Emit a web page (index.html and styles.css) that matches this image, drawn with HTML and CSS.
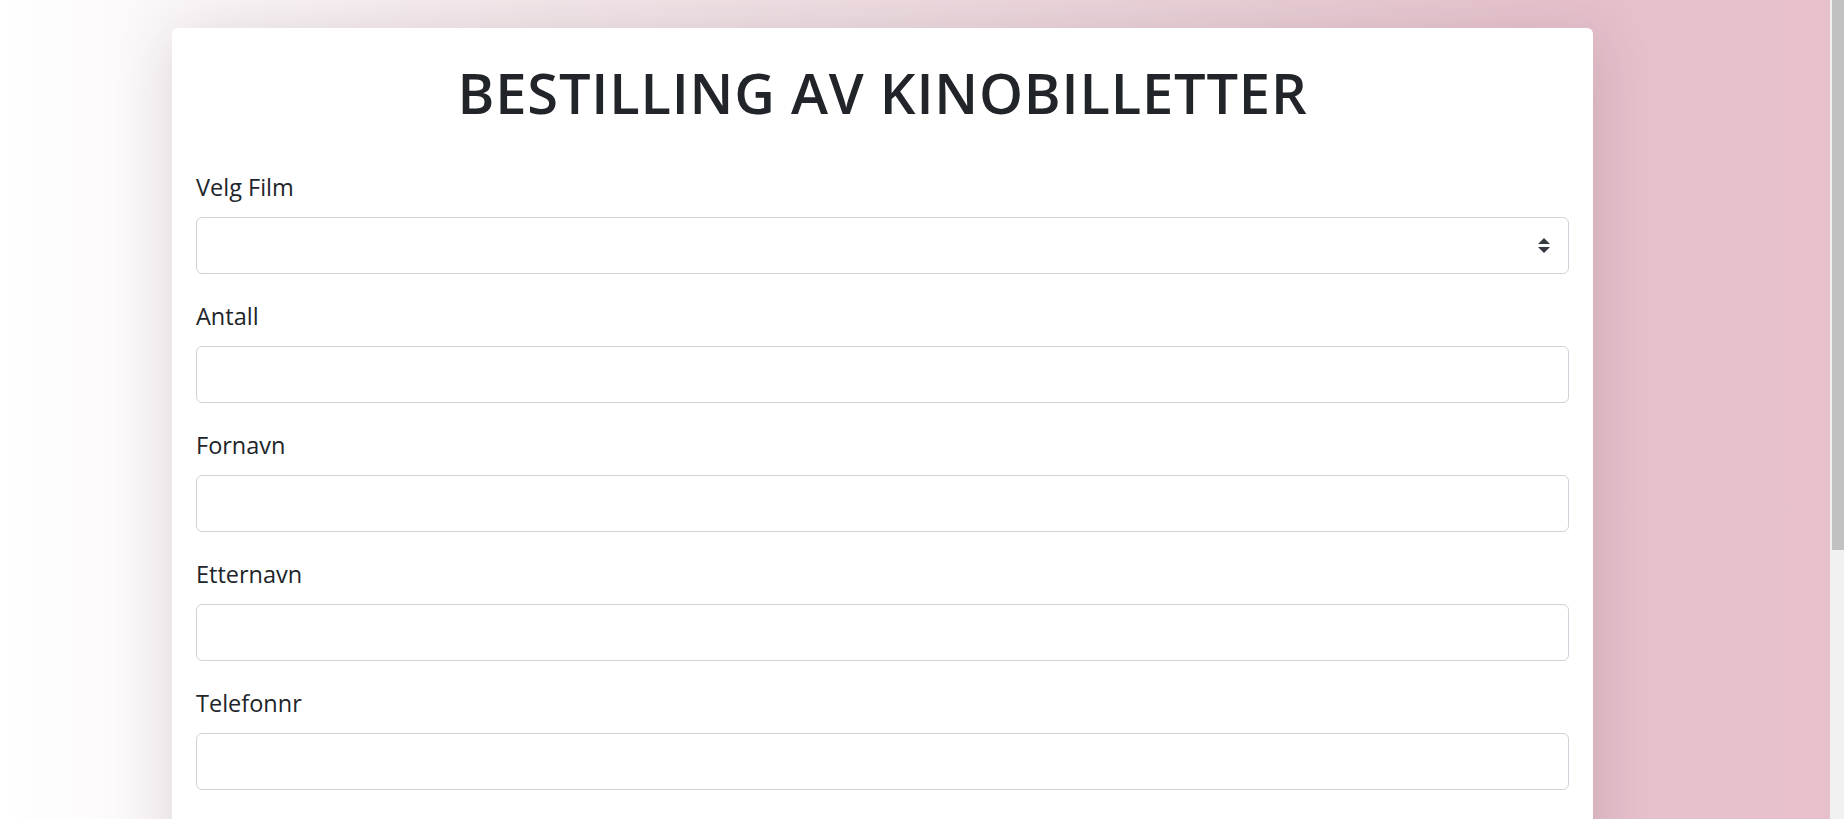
FILE: index.html
```html
<!DOCTYPE html>
<html lang="no">
<head>
<meta charset="utf-8">
<title>Bestilling av kinobilletter</title>
<link rel="stylesheet" href="styles.css">
</head>
<body>
<div class="viewport">
  <main class="page">
    <section class="card">
      <h1 class="title">BESTILLING AV KINOBILLETTER</h1>
      <form class="form">
        <div class="field">
          <label class="label" for="film">Velg Film</label>
          <select class="control select" id="film"><option></option></select>
        </div>
        <div class="field">
          <label class="label" for="antall">Antall</label>
          <input class="control" id="antall" type="text">
        </div>
        <div class="field">
          <label class="label" for="fornavn">Fornavn</label>
          <input class="control" id="fornavn" type="text">
        </div>
        <div class="field">
          <label class="label" for="etternavn">Etternavn</label>
          <input class="control" id="etternavn" type="text">
        </div>
        <div class="field">
          <label class="label" for="telefonnr">Telefonnr</label>
          <input class="control" id="telefonnr" type="text">
        </div>
      </form>
    </section>
  </main>
</div>
<div class="scrollbar" aria-hidden="true"><div class="thumb"></div></div>
</body>
</html>
```

FILE: styles.css
```css
html, body {
  height: 100%;
}
body {
  margin: 0;
  display: flex;
  overflow: hidden;
  font-family: "Open Sans", "Noto Sans", sans-serif;
  color: #212529;
}
.viewport {
  flex: 1;
  overflow: hidden;
  background: linear-gradient(90deg, #ffffff 0%, #fcf9fa 7%, #f3e8eb 28%, #eddbe0 50%, #e8ccd4 72%, #e6c1cc 88%, #e7c0cb 100%);
}
.scrollbar {
  width: 14px;
  flex: none;
  background: #f1f1f1;
  padding-left: 2px;
  box-sizing: border-box;
}
.thumb {
  height: 550px;
  background: #c1c1c1;
}
.page {
  padding: 28px 0 0 172px;
}
.card {
  width: 1421px;
  min-height: 1100px;
  box-sizing: border-box;
  background: #fff;
  border-radius: 6px;
  padding: 24px;
  box-shadow: 0 8px 60px rgba(60, 30, 40, 0.16);
}
.title {
  margin: 4px 0 41px;
  font-size: 56px;
  line-height: 72px;
  font-weight: 600;
  letter-spacing: 0.8px;
  text-align: center;
  color: #212529;
}
.form {
  display: flex;
  flex-direction: column;
}
.field {
  display: flex;
  flex-direction: column;
  margin-bottom: 24px;
}
.label {
  font-size: 23.5px;
  line-height: 36px;
  margin-bottom: 12px;
}
.control {
  box-sizing: border-box;
  height: 57px;
  width: 100%;
  border: 1px solid #ced4da;
  border-radius: 6px;
  background: #fff;
  font: inherit;
  font-size: 24px;
  padding: 9px 18px;
  color: #495057;
}
.select {
  appearance: none;
  -webkit-appearance: none;
  background: #fff url("data:image/svg+xml,%3csvg xmlns='http://www.w3.org/2000/svg' width='4' height='5' viewBox='0 0 4 5'%3e%3cpath fill='%23343a40' d='M2 0L0 2h4zm0 5L0 3h4z'/%3e%3c/svg%3e") no-repeat right 18px center;
  background-size: 12px 15px;
}
```
